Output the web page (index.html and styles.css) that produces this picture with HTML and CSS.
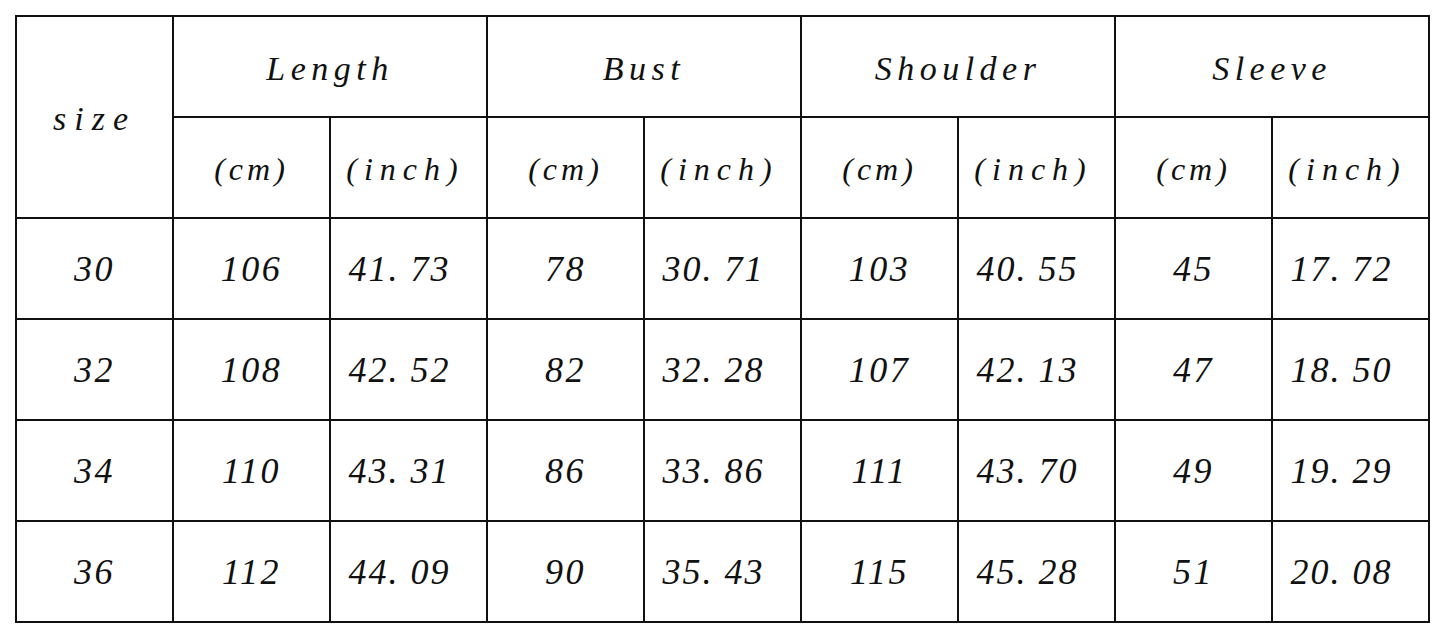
FILE: index.html
```html
<!DOCTYPE html>
<html>
<head>
<meta charset="utf-8">
<link rel="stylesheet" href="styles.css">
</head>
<body>
<table class="chart">
  <colgroup>
    <col class="c"><col class="c"><col class="c"><col class="c"><col class="c"><col class="c"><col class="c"><col class="c"><col class="c">
  </colgroup>
  <tr class="row">
    <td rowspan="2" class="lbl size">size</td>
    <td colspan="2" class="lbl">Length</td>
    <td colspan="2" class="lbl">Bust</td>
    <td colspan="2" class="lbl">Shoulder</td>
    <td colspan="2" class="lbl">Sleeve</td>
  </tr>
  <tr class="row">
    <td class="unit cm">(cm)</td><td class="unit inch">(inch)</td>
    <td class="unit cm">(cm)</td><td class="unit inch">(inch)</td>
    <td class="unit cm">(cm)</td><td class="unit inch">(inch)</td>
    <td class="unit cm">(cm)</td><td class="unit inch">(inch)</td>
  </tr>
  <tr class="row">
    <td class="num">30</td><td class="num">106</td><td class="num dec">41. 73</td><td class="num">78</td><td class="num dec">30. 71</td><td class="num">103</td><td class="num dec">40. 55</td><td class="num">45</td><td class="num dec">17. 72</td>
  </tr>
  <tr class="row">
    <td class="num">32</td><td class="num">108</td><td class="num dec">42. 52</td><td class="num">82</td><td class="num dec">32. 28</td><td class="num">107</td><td class="num dec">42. 13</td><td class="num">47</td><td class="num dec">18. 50</td>
  </tr>
  <tr class="row">
    <td class="num">34</td><td class="num">110</td><td class="num dec">43. 31</td><td class="num">86</td><td class="num dec">33. 86</td><td class="num">111</td><td class="num dec">43. 70</td><td class="num">49</td><td class="num dec">19. 29</td>
  </tr>
  <tr class="row">
    <td class="num">36</td><td class="num">112</td><td class="num dec">44. 09</td><td class="num">90</td><td class="num dec">35. 43</td><td class="num">115</td><td class="num dec">45. 28</td><td class="num">51</td><td class="num dec">20. 08</td>
  </tr>
</table>
</body>
</html>
```
FILE: styles.css
```css
html, body {
  margin: 0;
  padding: 0;
  background: #ffffff;
}
body {
  padding: 15px 0 0 15px;
  font-family: "Liberation Serif", "Times New Roman", serif;
  font-style: italic;
  color: #111111;
}
.chart {
  border-collapse: collapse;
  table-layout: fixed;
  width: 1415px;
  border: 2px solid #111;
}
.c {
  width: 157px;
}
.row {
  height: 101px;
}
.chart td {
  border: 2px solid #111;
  text-align: center;
  vertical-align: middle;
  padding: 0;
  white-space: pre;
}
.chart .lbl {
  font-size: 34px;
  letter-spacing: 5.5px;
  padding-top: 4px;
}
.chart .size {
  letter-spacing: 8px;
}
.chart .unit {
  font-size: 32px;
  padding-top: 4px;
}
.chart .cm {
  letter-spacing: 4px;
}
.chart .inch {
  letter-spacing: 7px;
  padding-right: 6px;
}
.chart .num {
  font-size: 36px;
  letter-spacing: 2.5px;
}
.chart .dec {
  letter-spacing: 2px;
  padding-right: 18px;
}
```
